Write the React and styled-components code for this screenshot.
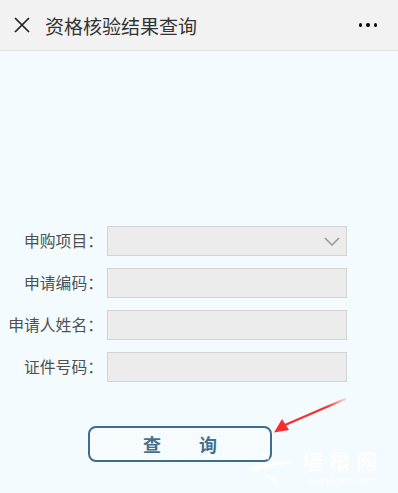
import React from "react";
import styled, { createGlobalStyle } from "styled-components";

const Global = createGlobalStyle`
  html, body { margin: 0; padding: 0; }
  body {
    background: #f3fbfe;
    font-family: "Noto Sans CJK SC", "Noto Sans", sans-serif;
  }
`;

const Page = styled.div`
  position: relative;
  width: 398px;
  height: 493px;
  overflow: hidden;
  background: #f3fbfe;
`;

const Header = styled.header`
  height: 50px;
  display: flex;
  align-items: center;
  background: #f2f2f2;
  border-bottom: 1px solid #e2e4e5;
  padding: 0 0 0 13px;
`;

const CloseIcon = styled.svg`
  width: 18px;
  height: 18px;
  flex: none;
`;

const Title = styled.h1`
  margin: 0 0 0 14px;
  font-size: 19px;
  font-weight: 400;
  color: #333;
  flex: 1;
  line-height: 1;
`;

const Dots = styled.div`
  display: flex;
  gap: 4px;
  margin-right: 21px;
`;

const Dot = styled.span`
  width: 3.5px;
  height: 3.5px;
  border-radius: 50%;
  background: #111;
`;

const Form = styled.div`
  padding-top: 175px;
  display: flex;
  flex-direction: column;
  gap: 12px;
`;

const Row = styled.div`
  display: flex;
  align-items: center;
`;

const Label = styled.label`
  width: 103px;
  text-align: right;
  font-size: 15.8px;
  color: #505050;
  white-space: nowrap;
  line-height: 1;
`;

const Field = styled.div`
  margin-left: 4px;
  width: 240px;
  height: 30px;
  box-sizing: border-box;
  background: #ececec;
  border: 1px solid #d4d4d4;
  display: flex;
  align-items: center;
  justify-content: flex-end;
  padding-right: 6px;
`;

const Chevron = styled.svg`
  width: 16px;
  height: 9px;
`;

const Button = styled.button`
  margin: 44px 0 0 88px;
  width: 184px;
  height: 36px;
  box-sizing: border-box;
  border: 2px solid #3f6b8f;
  border-radius: 8px;
  background: #f6fbfd;
  display: flex;
  align-items: center;
  justify-content: center;
  gap: 38px;
  font-family: "Noto Sans CJK SC", sans-serif;
  font-size: 18px;
  font-weight: 700;
  color: #44708f;
  padding: 0;
`;

const Arrow = styled.svg`
  position: absolute;
  left: 270px;
  top: 395px;
  width: 80px;
  height: 42px;
`;

const Watermark = styled.div`
  position: absolute;
  left: 246px;
  top: 449px;
  display: flex;
  align-items: center;
  gap: 6px;
  color: #ffffff;
  opacity: 0.9;
`;

const WmText = styled.div`
  display: flex;
  flex-direction: column;
  align-items: center;
  gap: 3px;
`;

const WmBig = styled.span`
  font-size: 21px;
  font-weight: 700;
  letter-spacing: 6px;
  line-height: 22px;
`;

const WmSmall = styled.span`
  font-family: "Liberation Sans", sans-serif;
  font-size: 11px;
  line-height: 12px;
`;

const fields = [
  { label: "申购项目：", select: true },
  { label: "申请编码：" },
  { label: "申请人姓名：" },
  { label: "证件号码：" },
];

export default function App() {
  return (
    <Page>
      <Global />
      <Header>
        <CloseIcon viewBox="0 0 18 18">
          <path d="M2 2 L16 16 M16 2 L2 16" stroke="#222" strokeWidth="1.7" fill="none" />
        </CloseIcon>
        <Title>资格核验结果查询</Title>
        <Dots>
          <Dot />
          <Dot />
          <Dot />
        </Dots>
      </Header>
      <Form>
        {fields.map((f) => (
          <Row key={f.label}>
            <Label>{f.label}</Label>
            <Field>
              {f.select && (
                <Chevron viewBox="0 0 16 9">
                  <path d="M1 1 L8 8 L15 1" stroke="#9a9a9a" strokeWidth="1.6" fill="none" />
                </Chevron>
              )}
            </Field>
          </Row>
        ))}
      </Form>
      <Button>
        <span>查</span>
        <span>询</span>
      </Button>
      <Arrow viewBox="0 0 80 42">
        <defs>
          <linearGradient id="ag" x1="1" y1="0" x2="0" y2="1">
            <stop offset="0" stopColor="#ff3b3b" stopOpacity="0.2" />
            <stop offset="0.3" stopColor="#f53333" />
            <stop offset="1" stopColor="#f52f2f" />
          </linearGradient>
        </defs>
        <path d="M75 4 L15 30" stroke="url(#ag)" strokeWidth="2.4" strokeLinecap="round" />
        <path d="M4 37.5 L12 24 L19 35 Z" fill="#f52f2f" />
      </Arrow>
      <Watermark>
        <svg width="50" height="36" viewBox="0 0 50 36">
          <path d="M2 20 C12 12 30 10 48 14 C34 14 20 16 10 22 Z" fill="#fff" />
          <path d="M14 4 C20 2 26 6 22 10 C20 8 18 6 14 4 Z" fill="#fff" />
          <path d="M18 26 C26 24 34 28 30 34 C28 30 24 28 18 26 Z" fill="#fff" />
        </svg>
        <WmText>
          <WmBig>墙根网</WmBig>
          <WmSmall>qianggen.com</WmSmall>
        </WmText>
      </Watermark>
    </Page>
  );
}
